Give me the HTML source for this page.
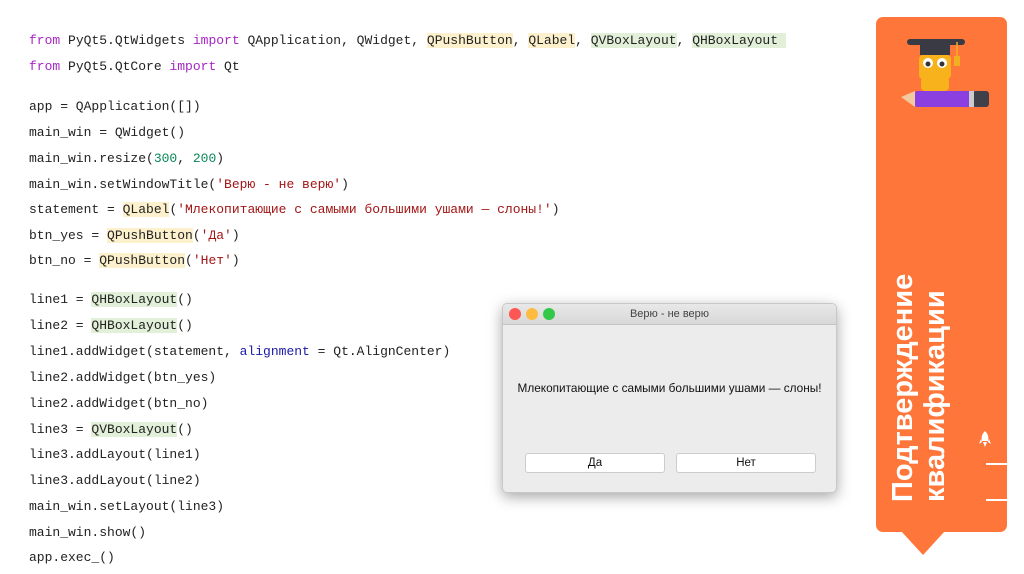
<!DOCTYPE html>
<html><head><meta charset="utf-8"><style>
body{margin:0;width:1024px;height:574px;background:#fff;position:relative;overflow:hidden;font-family:"Liberation Sans",sans-serif}
.l{position:absolute;left:29px;font-family:"Liberation Mono",monospace;font-size:13px;color:#222;white-space:pre;line-height:18px}
.k{color:#a626c4}.n{color:#098658}.s{color:#a31515}.b{color:#1a1aa6}
.y{background:#fdf1cd}.g{background:#e2efd9}
#panel{position:absolute;left:876px;top:17px;width:131px;height:515px;background:#ff763a;border-radius:7px}
#tri{position:absolute;left:901px;top:531px;width:0;height:0;border-left:22px solid transparent;border-right:22px solid transparent;border-top:24px solid #ff763a}
.vt{position:absolute;color:#fff;font-weight:bold;font-size:29px;transform:rotate(-90deg);transform-origin:left top;white-space:nowrap;line-height:30px}
#win{position:absolute;left:502px;top:303px;width:335px;height:190px;background:#ececec;border-radius:5px;box-shadow:0 4px 14px rgba(0,0,0,.35);border:1px solid #c8c8c8;box-sizing:border-box;overflow:hidden}
#tb{height:20px;background:linear-gradient(#e8e8e8,#d8d8d8);border-bottom:1px solid #c4c4c4;text-align:center;font-size:11px;color:#444;line-height:20px;position:relative}
.d{position:absolute;top:4px;width:12px;height:12px;border-radius:50%}
.btn{position:absolute;top:149px;width:138px;height:18px;background:#fff;border:1px solid #ccc;border-radius:3px;font-size:11.5px;text-align:center;line-height:18px;color:#111}
</style></head><body>
<div class="l" style="top:32px"><span class="k">from</span> PyQt5.QtWidgets <span class="k">import</span> QApplication, QWidget, <span class="y">QPushButton</span>, <span class="y">QLabel</span>, <span class="g">QVBoxLayout</span>, <span class="g">QHBoxLayout </span></div>
<div class="l" style="top:58px"><span class="k">from</span> PyQt5.QtCore <span class="k">import</span> Qt</div>
<div class="l" style="top:98px">app = QApplication([])</div>
<div class="l" style="top:124px">main_win = QWidget()</div>
<div class="l" style="top:150px">main_win.resize(<span class="n">300</span>, <span class="n">200</span>)</div>
<div class="l" style="top:176px">main_win.setWindowTitle(<span class="s">'Верю - не верю'</span>)</div>
<div class="l" style="top:201px">statement = <span class="y">QLabel</span>(<span class="s">'Млекопитающие с самыми большими ушами — слоны!'</span>)</div>
<div class="l" style="top:227px">btn_yes = <span class="y">QPushButton</span>(<span class="s">'Да'</span>)</div>
<div class="l" style="top:252px">btn_no = <span class="y">QPushButton</span>(<span class="s">'Нет'</span>)</div>
<div class="l" style="top:291px">line1 = <span class="g">QHBoxLayout</span>()</div>
<div class="l" style="top:317px">line2 = <span class="g">QHBoxLayout</span>()</div>
<div class="l" style="top:343px">line1.addWidget(statement, <span class="b">alignment</span> = Qt.AlignCenter)</div>
<div class="l" style="top:369px">line2.addWidget(btn_yes)</div>
<div class="l" style="top:395px">line2.addWidget(btn_no)</div>
<div class="l" style="top:421px">line3 = <span class="g">QVBoxLayout</span>()</div>
<div class="l" style="top:446px">line3.addLayout(line1)</div>
<div class="l" style="top:472px">line3.addLayout(line2)</div>
<div class="l" style="top:498px">main_win.setLayout(line3)</div>
<div class="l" style="top:524px">main_win.show()</div>
<div class="l" style="top:549px">app.exec_()</div>

<div id="win">
 <div id="tb"><span class="d" style="left:6px;background:#fc5753"></span><span class="d" style="left:23px;background:#fdbc40"></span><span class="d" style="left:40px;background:#34c84a"></span>Верю - не верю</div>
 <div style="position:absolute;top:77px;left:0;width:100%;text-align:center;font-size:11.8px;color:#111">Млекопитающие с самыми большими ушами — слоны!</div>
 <div class="btn" style="left:22px">Да</div>
 <div class="btn" style="left:173px">Нет</div>
</div>

<div id="panel"></div><div id="tri"></div>
<svg style="position:absolute;left:895px;top:35px" width="96" height="85" viewBox="0 0 96 85">
 <rect x="12" y="4" width="58" height="6" rx="3" fill="#3a3a44"/>
 <rect x="25" y="8" width="30" height="12" fill="#3a3a44"/>
 <line x1="62" y1="7" x2="62" y2="22" stroke="#f0b020" stroke-width="1.5"/>
 <rect x="59" y="21" width="6" height="10" fill="#f0b020"/>
 <rect x="24" y="20" width="32" height="24" rx="4" fill="#f7b21c"/>
 <circle cx="33" cy="28" r="5" fill="#fff"/><circle cx="47" cy="28" r="5" fill="#fff"/>
 <circle cx="33" cy="29" r="2.5" fill="#333"/><circle cx="47" cy="29" r="2.5" fill="#333"/>
 <rect x="26" y="42" width="28" height="14" rx="4" fill="#f7b21c"/>
 <polygon points="6,62 20,56 20,72" fill="#f3c9a0"/>
 <rect x="20" y="56" width="64" height="16" rx="2" fill="#8b3fe0"/>
 <rect x="78" y="56" width="16" height="16" rx="3" fill="#40404a"/>
 <rect x="74" y="56" width="5" height="16" fill="#ccc"/>
</svg>
<div class="vt" style="left:888px;top:502px">Подтверждение</div>
<div class="vt" style="left:920px;top:502px">квалификации</div>
<svg style="position:absolute;left:978px;top:430px" width="14" height="18" viewBox="0 0 14 18"><path d="M7 1 C10 4 11 7 10 11 L4 11 C3 7 4 4 7 1Z M3 9 L1 14 L4 12Z M11 9 L13 14 L10 12Z M5 12 L7 17 L9 12Z" fill="#fff"/></svg>
<div style="position:absolute;left:986px;top:463px;width:21px;height:2px;background:#fff"></div>
<div style="position:absolute;left:986px;top:499px;width:21px;height:2px;background:#fff"></div>
</body></html>
